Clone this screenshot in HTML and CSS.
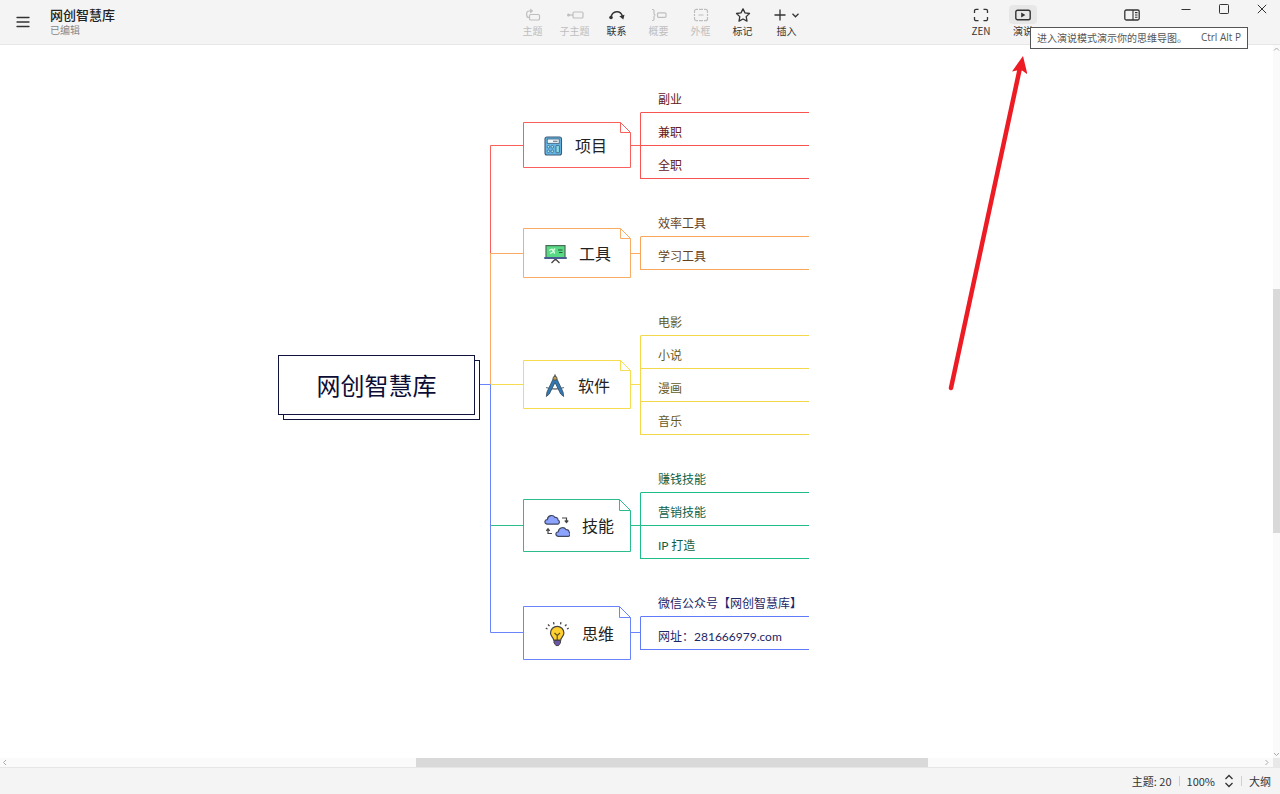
FILE: index.html
```html
<!DOCTYPE html>
<html lang="zh-CN">
<head>
<meta charset="utf-8">
<title>网创智慧库</title>
<link rel="stylesheet" href="styles.css">
</head>
<body>
<div class="app">
  <header class="topbar">
    <div class="file">
      <button class="menu" type="button" aria-label="菜单">
        <svg width="14" height="12" viewBox="0 0 14 12" fill="none" stroke="#333" stroke-width="1.3" stroke-linecap="round"><path d="M1 1.5h12M1 6h12M1 10.5h12"/></svg>
      </button>
      <div class="file-info">
        <h1 class="file-name">网创智慧库</h1>
        <span class="file-state">已编辑</span>
      </div>
    </div>

    <nav class="tools">
      <button class="tool" type="button" disabled>
        <span class="tool-icon"><svg width="16" height="14" viewBox="0 0 16 14" fill="none" stroke="currentColor" stroke-width="1.2"><rect x="4.5" y="6.5" width="10" height="5.5" rx="1.3"/><path d="M4.500 9.500H4A2.300 2.300 0 0 1 1.700 7.200V5.300A2.300 2.300 0 0 1 4 3h2.500"/><path d="M5.500 1l2.300 2-2.300 2z" fill="currentColor" stroke-width=".6"/></svg></span>
        <span>主题</span>
      </button>
      <button class="tool" type="button" disabled>
        <span class="tool-icon"><svg width="18" height="14" viewBox="0 0 18 14" fill="none" stroke="currentColor" stroke-width="1.2"><circle cx="2.500" cy="7" r="1.500" fill="currentColor" stroke="none"/><path d="M3 7h4"/><rect x="7" y="4" width="10" height="6" rx="1.300"/></svg></span>
        <span>子主题</span>
      </button>
      <button class="tool" type="button">
        <span class="tool-icon"><svg width="16" height="14" viewBox="0 0 16 14" fill="none" stroke="currentColor" stroke-width="1.500"><path d="M2 9C3.500 2.500 11.500 2 13.300 8"/><circle cx="2" cy="9.500" r="1.800" fill="currentColor" stroke="none"/><path d="M10.300 8.300l5.200-1.500-1.200 4.800z" fill="currentColor" stroke="none"/></svg></span>
        <span>联系</span>
      </button>
      <button class="tool" type="button" disabled>
        <span class="tool-icon"><svg width="16" height="14" viewBox="0 0 16 14" fill="none" stroke="currentColor" stroke-width="1.200"><path d="M1 1.500h.8q1.200 0 1.200 1.200v2.500Q3 7 4.500 7 3 7 3 8.800v2.500q0 1.200-1.200 1.200H1"/><rect x="6.500" y="4.800" width="8.500" height="4.500" rx="1"/></svg></span>
        <span>概要</span>
      </button>
      <button class="tool" type="button" disabled>
        <span class="tool-icon"><svg width="16" height="14" viewBox="0 0 16 14" fill="none" stroke="currentColor" stroke-width="1.200"><path d="M1.500 5V3.300A2 2 0 0 1 3.500 1.300h1.500M6 1.300h4M11 1.300h1.500a2 2 0 0 1 2 2V5M14.500 6v2M14.500 9v1.700a2 2 0 0 1-2 2H11M10 12.700H6M5 12.700H3.500a2 2 0 0 1-2-2V9M1.500 8V6M5.500 7h5"/></svg></span>
        <span>外框</span>
      </button>
      <button class="tool" type="button">
        <span class="tool-icon"><svg width="16" height="14" viewBox="0 0 16 14" fill="none" stroke="currentColor" stroke-width="1.300" stroke-linejoin="round"><path d="M8 .9l2 4 4.500.6-3.300 3.100.8 4.500L8 11l-4 2.100.8-4.500L1.500 5.500 6 4.900z"/></svg></span>
        <span>标记</span>
      </button>
      <button class="tool" type="button">
        <span class="tool-icon"><svg width="26" height="14" viewBox="0 0 26 14" fill="none" stroke="currentColor" stroke-width="1.300"><path d="M6 1.500v11M.500 7h11M18.500 5.800l3 3 3-3"/></svg></span>
        <span>插入</span>
      </button>
    </nav>

    <div class="right">
      <button class="tool" type="button">
        <span class="tool-icon"><svg width="16" height="14" viewBox="0 0 16 14" fill="none" stroke="currentColor" stroke-width="1.300"><path d="M1.500 5V2.800A1.500 1.500 0 0 1 3 1.300h2.500M10.500 1.300H13a1.500 1.500 0 0 1 1.500 1.500V5M14.500 9v2.200a1.500 1.500 0 0 1-1.500 1.500h-2.500M5.500 12.700H3a1.500 1.500 0 0 1-1.500-1.500V9"/></svg></span>
        <span>ZEN</span>
      </button>
      <div class="present">
        <button class="tool tool-active" type="button" aria-describedby="tip">
          <span class="tool-icon"><svg width="16" height="12" viewBox="0 0 16 12" fill="none" stroke="currentColor" stroke-width="1.400"><rect x=".800" y="1.200" width="14.400" height="9.600" rx="1.800"/><path d="M6.200 3.600L10.400 6l-4.200 2.400z" fill="currentColor" stroke="none"/></svg></span>
          <span>演说</span>
        </button>
        <div class="tooltip" id="tip" role="tooltip"><span>进入演说模式演示你的思维导图。</span><kbd>Ctrl Alt P</kbd></div>
      </div>
      <button class="tool panel" type="button" aria-label="面板">
        <span class="tool-icon"><svg width="16" height="12" viewBox="0 0 16 12" fill="none" stroke="currentColor" stroke-width="1.300"><rect x=".800" y="1" width="14.400" height="10" rx="1.500"/><path d="M9 1v10M11 3.600h2.500M11 6h2.500M11 8.300h2.500" stroke-width="1.100"/></svg></span>
      </button>
      <div class="window">
        <button type="button" aria-label="最小化"><svg width="10" height="10" viewBox="0 0 10 10" stroke="#333"><path d="M.500 5.500h9"/></svg></button>
        <button type="button" aria-label="最大化"><svg width="10" height="10" viewBox="0 0 10 10" fill="none" stroke="#333"><rect x=".500" y=".500" width="9" height="9" rx=".800"/></svg></button>
        <button type="button" aria-label="关闭"><svg width="10" height="10" viewBox="0 0 10 10" stroke="#333"><path d="M.800.800l8.400 8.400M9.200.800L.800 9.200"/></svg></button>
      </div>
    </div>
  </header>

  <main class="workspace">
    <div class="canvas">
      <svg class="lines" aria-hidden="true" fill="none">
        <g transform="translate(0 -45)">
          <path class="c-red" d="M490.500 253V145.500H523.500M630.500 145.500H640.500M523.500 122.500H620.500L630.500 132.500V167.500H523.500ZM620.500 122.500V132.500H630.500"/>
          <path class="c-orange" d="M490.500 384V253M490.500 253.500H523.500M630.500 253.500H640.500M523.500 228.500H620.500L630.500 238.500V277.500H523.500ZM620.500 228.500V238.500H630.500"/>
          <path class="c-yellow" d="M491 384.500H523.500M630.500 384.500H640.500M523.500 360.500H620.500L630.500 370.500V408.500H523.500ZM620.500 360.500V370.500H630.500"/>
          <path class="c-blue" d="M480 384.500H490.500V632.500H523.500M630.500 632.500H640.500M523.500 606.500H619.500L630.500 617.500V659.500H523.500ZM619.500 606.500V617.500H630.500"/>
          <path class="c-green" d="M491 525.500H523.500M630.500 525.500H640.500M523.500 499.500H619.500L630.500 510.500V551.500H523.500ZM619.500 499.500V510.500H630.500"/>
        </g>
      </svg>

      <div class="root">网创智慧库</div>

      <div class="branch b1">
        <svg width="19" height="20" viewBox="0 0 19 20"><rect x="1" y="1" width="16.500" height="18" rx="2" fill="#65b5e5" stroke="#3b5a76" stroke-width="1.100"/><rect x="3.200" y="3" width="12" height="4.300" fill="#eef7fc" stroke="#3b5a76" stroke-width=".800"/><path d="M9 5.300h4.500" stroke="#7c8b99" stroke-width="1.300"/><rect x="12" y="9.500" width="3.400" height="7.200" rx=".600" fill="#85dce8" stroke="#3b5a76" stroke-width=".800"/><g fill="#a7e4ee" stroke="#3b5a76" stroke-width=".700"><circle cx="4.500" cy="10.800" r="1.300"/><circle cx="8.300" cy="10.800" r="1.300"/><circle cx="4.500" cy="15.300" r="1.300"/><circle cx="8.300" cy="15.300" r="1.300"/></g></svg>
        <span>项目</span>
      </div>
      <div class="branch b2">
        <svg width="23" height="20" viewBox="0 0 23 20"><path d="M11.500 14v2.500M11.500 15l-4 4M11.500 15l4 4" stroke="#444" stroke-width="1.300"/><rect x="2" y="1.600" width="19" height="12" fill="#58d983" stroke="#4a6b58" stroke-width="1.200"/><path d="M1 14h21" stroke="#4a5a92" stroke-width="2" stroke-linecap="round"/><path d="M5 6.500l3-1.500 1 2 2-2.500M6 9.500l4-2 .500 2.200" fill="none" stroke="#d8ffe4" stroke-width="1.300"/><path d="M14 6h4.500M15 8.500h3.500" stroke="#285a3d" stroke-width="1.100"/></svg>
        <span>工具</span>
      </div>
      <div class="branch b3">
        <svg width="22" height="24" viewBox="0 0 22 24"><path d="M2 13.500q9 3 18 0" fill="none" stroke="#6b747b" stroke-width="1.300"/><path d="M9.300 4.500L3 18l-.7 4.500L5.300 20 11 8.500 16.700 20l3 2.500L19 18 12.700 4.500z" fill="#2e78b7" stroke="#3d5265" stroke-width=".900" stroke-linejoin="round"/><circle cx="11" cy="4.300" r="2" fill="#b89c4c" stroke="#4a5054" stroke-width=".900"/><path d="M11 .600v2" stroke="#4a5054" stroke-width="1.500"/></svg>
        <span>软件</span>
      </div>
      <div class="branch b4">
        <svg width="26" height="24" viewBox="0 0 26 24"><g fill="#8ca4ff" stroke="#414863" stroke-width="1.200" stroke-linejoin="round"><path d="M3 10.200C-.200 9.600.500 5.600 3.300 5.700 3.800 1 9.300.300 10.900 3.500c2.300-.300 3.200 1.200 3.100 2.500 2.200 1 1.600 4-.5 4.200z"/><path d="M14 22.300c-3.200-.6-2.500-4.600.3-4.500.5-4.700 6-5.400 7.600-2.200 2.300-.3 3.200 1.200 3.100 2.500 1.800 1 1.200 4-.9 4.200z"/></g><path d="M18 4h4.500v4M20.800 6.500l1.700 2 1.700-2M8 19.500H4V15M2.300 16.800L4 14.800l1.700 2" fill="none" stroke="#444" stroke-width="1.200"/></svg>
        <span>技能</span>
      </div>
      <div class="branch b5">
        <svg width="26" height="26" viewBox="0 0 26 26"><path d="M9.700 19.200c0-2.700-3.200-3.600-3.200-7.200a6.700 6.700 0 0 1 13.400 0c0 3.600-3.200 4.500-3.200 7.200z" fill="#ffd02f" stroke="#444" stroke-width="1.200"/><path d="M10.500 12l2.700 2.500L16 12M13.200 14.500V19" fill="none" stroke="#5c4b1c" stroke-width="1.100"/><path d="M10 19.500h6.500v2.300l-2 2.800H12l-2-2.800z" fill="#6b55a7" stroke="#444" stroke-width="1"/><path d="M10 3.300L9.500 1.200M16.500 3.300l.500-2.100M5.500 5L4 3.500M21 5l1.500-1.500M3.500 8L1.800 7.200M23 8l1.700-.8" stroke="#444" stroke-width="1.300"/></svg>
        <span>思维</span>
      </div>

      <ul class="topics t1"><li>副业</li><li>兼职</li><li>全职</li></ul>
      <ul class="topics t2"><li>效率工具</li><li>学习工具</li></ul>
      <ul class="topics t3"><li>电影</li><li>小说</li><li>漫画</li><li>音乐</li></ul>
      <ul class="topics t4"><li>赚钱技能</li><li>营销技能</li><li>IP 打造</li></ul>
      <ul class="topics t5"><li>微信公众号【网创智慧库】</li><li>网址：281666979.com</li></ul>

      <svg class="pointer" width="80" height="338" viewBox="0 0 80 338" aria-hidden="true"><path d="M4 332L72.500 14" stroke="#ed1c24" stroke-width="4.500" stroke-linecap="round"/><path d="M76 0L65 15.500l6-1.300 4.500.500 5 3.800z" fill="#ed1c24"/></svg>
    </div>
    <div class="bar bar-v">
      <svg width="7" height="8" viewBox="0 0 7 8" fill="none" stroke="#aaa"><path d="M1 5.500l2.500-2.500L6 5.500"/></svg>
      <div class="track"><div class="before"></div><div class="thumb"></div><div class="after"></div></div>
      <svg width="7" height="8" viewBox="0 0 7 8" fill="none" stroke="#aaa"><path d="M1 3l2.500 2.500L6 3"/></svg>
    </div>
    <div class="bar bar-h">
      <svg width="10" height="9" viewBox="0 0 10 9" fill="none" stroke="#aaa"><path d="M6 2L3.500 4.500 6 7"/></svg>
      <div class="track"><div class="before"></div><div class="thumb"></div><div class="after"></div></div>
      <svg width="10" height="9" viewBox="0 0 10 9" fill="none" stroke="#aaa"><path d="M2.500 2L5 4.500 2.500 7"/></svg>
    </div>
    <div class="corner"></div>
  </main>

  <footer class="status">
    <span>主题: 20</span>
    <i class="divider"></i>
    <button class="zoom" type="button"><span>100%</span><svg width="10" height="14" viewBox="0 0 10 14" fill="none" stroke="#333" stroke-width="1.300"><path d="M1.500 5L5 1.500 8.500 5M1.500 9L5 12.500 8.500 9"/></svg></button>
    <i class="divider"></i>
    <button type="button">大纲</button>
  </footer>
</div>
</body>
</html>
```

FILE: styles.css
```css
* {
  box-sizing: border-box;
}

body {
  margin: 0;
  font-family: "Noto Sans CJK SC", "Noto Sans", sans-serif;
  font-size: 11px;
  color: #333;
}

button {
  padding: 0;
  border: 0;
  background: none;
  color: inherit;
  font: inherit;
}

svg {
  display: block;
  flex: none;
}

.app {
  display: grid;
  grid-template-rows: auto minmax(0, 1fr) auto;
  height: 100vh;
}

/* Top bar */
.topbar {
  display: grid;
  grid-template-columns: minmax(0, 17fr) auto minmax(0, 5fr) auto;
  height: 45px;
  background: #f4f4f4;
  border-bottom: 1px solid #e6e6e6;
}

.file {
  display: flex;
  align-items: center;
  gap: 20px;
  padding-left: 16px;
}

.file-info {
  display: flex;
  flex-direction: column;
}

.file-name {
  margin: 0;
  font-size: 13px;
  font-weight: 500;
  line-height: 16px;
  color: #222;
}

.file-state {
  font-size: 10px;
  line-height: 14px;
  color: #888;
}

.tools {
  display: flex;
}

.tool {
  display: flex;
  flex-direction: column;
  align-items: center;
  width: 42px;
  padding-top: 5px;
  font-size: 10px;
  line-height: 14px;
  white-space: nowrap;
}

.tools .tool:last-child {
  width: 46px;
}

.tool:disabled {
  color: #bebebe;
}

.tool-icon {
  display: flex;
  align-items: center;
  justify-content: center;
  width: 28px;
  height: 19px;
  border-radius: 4px;
}

.tool-active .tool-icon {
  background: #e7e7e7;
}

.right {
  grid-column: 4;
  display: flex;
}

.present {
  position: relative;
}

.tooltip {
  position: absolute;
  z-index: 2;
  top: 27px;
  left: 28px;
  display: flex;
  align-items: center;
  justify-content: space-between;
  width: 218px;
  height: 22px;
  padding: 0 6px 2px;
  border: 1px solid #555;
  background: #fff;
  color: #555;
  font-size: 10px;
  white-space: nowrap;
}

.tooltip kbd {
  font-family: "Open Sans", "Noto Sans", sans-serif;
  font-size: 10px;
}

.panel {
  margin: 0 15px 0 67px;
}

.window {
  display: flex;
  gap: 2px;
}

.window button {
  display: grid;
  place-items: center;
  width: 36px;
  height: 18px;
}

/* Workspace */
.workspace {
  display: grid;
  grid-template-columns: minmax(0, 1fr) 7px;
  grid-template-rows: minmax(0, 1fr) 10px;
  background: #fff;
}

.canvas {
  position: relative;
  overflow: hidden;
}

.lines {
  position: absolute;
  width: 100%;
  height: 100%;
}

.c-red { stroke: #f9605c; }
.c-orange { stroke: #f9ac65; }
.c-yellow { stroke: #f5dc50; }
.c-green { stroke: #2bbd8c; }
.c-blue { stroke: #6a84fb; }

.root,
.branch,
.topics,
.pointer {
  position: absolute;
}

.root {
  top: 310px;
  left: 278px;
  display: grid;
  place-items: center;
  width: 197px;
  height: 60px;
  padding-bottom: 2px;
  border: 1px solid #11133f;
  background: #fff;
  box-shadow: 5px 5px 0 -1px #fff, 5px 5px 0 0 #11133f;
  color: #0c0d35;
  font-size: 24px;
}

.branch {
  left: 523px;
  display: flex;
  align-items: center;
  gap: 12px;
  width: 108px;
  padding-left: 21px;
  color: #222;
  font-size: 16px;
}

.branch span {
  padding-bottom: 2px;
}

.b1 { top: 77px; height: 47px; }
.b2 { top: 184px; height: 50px; }
.b3 { top: 316px; height: 49px; }
.b4 { top: 455px; height: 52px; }
.b5 { top: 562px; height: 53px; }

.topics {
  left: 640px;
  width: 169px;
  margin: 0;
  padding: 0;
  list-style: none;
  font-family: Lato, "Noto Sans CJK SC", sans-serif;
  font-size: 12px;
}

.topics li {
  height: 33px;
  padding: 10px 0 0 17px;
  border-bottom: 1px solid;
  border-left: 1px solid;
  border-color: var(--line);
  line-height: 20px;
  white-space: nowrap;
}

.topics li:first-child {
  border-left-color: transparent;
}

.t1 { top: 35px; --line: #f8534f; color: #64201e; }
.t2 { top: 159px; --line: #f9a65a; color: #64421f; }
.t3 { top: 258px; --line: #f3d74a; color: #655a1c; }
.t4 { top: 415px; --line: #1fbd87; color: #0f5f45; }
.t5 { top: 539px; --line: #5f7bfb; color: #1c2767; }

.pointer {
  top: 11px;
  left: 947px;
}

/* Scroll bars */
.bar {
  display: flex;
  background: #fafafa;
}

.bar-v {
  flex-direction: column;
}

.bar-h {
  border-bottom: 1px solid #e6e6e6;
}

.track {
  display: flex;
  flex: 1;
  flex-direction: inherit;
}

.thumb {
  background: #d9d9d9;
}

.bar-v .before { flex: 236; }
.bar-v .thumb { flex: 244; }
.bar-v .after { flex: 217; }

.bar-h .before { flex: 406; }
.bar-h .thumb { flex: 512; }
.bar-h .after { flex: 335; }

.corner {
  background: #e8e8e8;
}

/* Status bar */
.status {
  display: flex;
  align-items: center;
  justify-content: flex-end;
  gap: 7px;
  height: 26px;
  padding-right: 9px;
  background: #f4f4f4;
}

.zoom {
  display: flex;
  align-items: center;
  gap: 9px;
}

.divider {
  width: 1px;
  height: 10px;
  background: #d0d0d0;
}
```
